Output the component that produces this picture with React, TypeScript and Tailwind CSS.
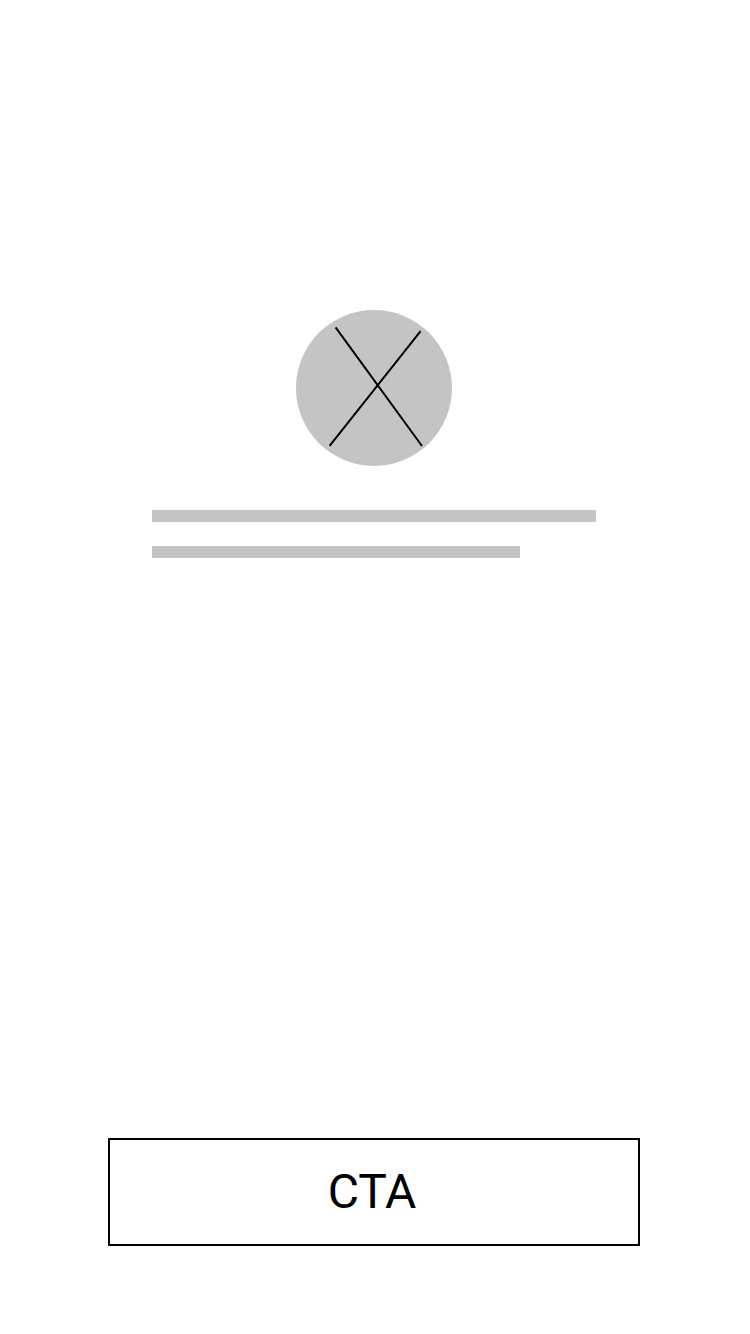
export default function App() {
  return (
    <main className="flex h-[1334px] w-[750px] flex-col bg-white px-[108px] pt-[310px] pb-[88px] font-['Roboto',sans-serif] text-black">
      <svg
        className="ml-[188px] size-[156px] shrink-0"
        viewBox="0 0 156 156"
        fill="none"
        aria-hidden="true"
      >
        <circle cx="78" cy="78" r="78" fill="#c4c4c4" />
        <path d="M39.6 17.4L126 136M124.6 21.2L33.6 135.8" stroke="black" strokeWidth="2" />
      </svg>
      <div className="mt-11 ml-11 flex flex-col gap-6">
        <div className="h-3 w-[444px] bg-[#c4c4c4]" />
        <div className="h-3 w-[368px] bg-[#c4c4c4]" />
      </div>
      <button
        type="button"
        className="mt-auto flex h-[108px] w-[532px] items-center justify-center border-2 border-black bg-white pr-1 text-[48px] leading-[56px]"
      >
        CTA
      </button>
    </main>
  );
}
